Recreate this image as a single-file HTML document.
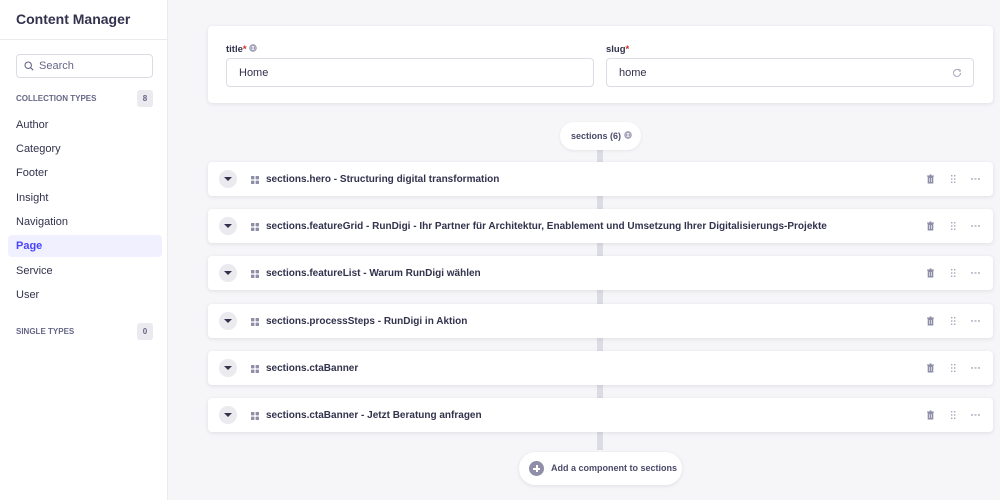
<!DOCTYPE html>
<html><head><meta charset="utf-8"><style>
*{box-sizing:border-box;margin:0;padding:0}
body{width:1000px;height:500px;overflow:hidden;background:#f6f6f9;font-family:"Liberation Sans",sans-serif;color:#32324d;position:relative}
.side{position:absolute;left:0;top:0;width:168px;height:500px;background:#fff;border-right:1px solid #eaeaef}
.side h1{position:absolute;left:16px;top:11px;font-size:14px;font-weight:bold;color:#32324d}
.side .hr{position:absolute;left:0;top:39px;width:167px;border-top:1px solid #eaeaef}
.search{position:absolute;left:16px;top:54px;width:137px;height:24px;border:1px solid #dcdce4;border-radius:4px;font-size:11px;color:#666687;padding:5px 0 0 22px}
.search svg{position:absolute;left:7px;top:6px}
.cat{position:absolute;left:16px;font-size:8px;font-weight:bold;color:#666687}
.badge{position:absolute;left:137px;width:16px;height:17px;background:#eaeaef;border-radius:3px;font-size:8px;font-weight:bold;color:#666687;text-align:center;line-height:17px}
.item{position:absolute;left:16px;font-size:11px;color:#32324d}
.active{position:absolute;left:8px;top:235px;width:154px;height:22px;background:#f0f0ff;border-radius:4px}
.card{position:absolute;background:#fff;border-radius:4px;box-shadow:0 1px 4px rgba(33,33,52,.1)}
.lbl{position:absolute;font-size:9.5px;font-weight:bold;color:#32324d}
.lbl b{color:#d02b20}
.inp{position:absolute;height:29px;border:1px solid #dcdce4;border-radius:4px;font-size:11px;padding:8px 0 0 12px;color:#32324d}
.line{position:absolute;left:597px;top:150px;width:6px;height:300px;background:#dcdce4}
.pill{position:absolute;left:560px;top:122px;width:81px;height:28px;background:#fff;border-radius:14px;font-size:9px;font-weight:bold;color:#4a4a6a;padding:9px 0 0 11px;box-shadow:0 1px 3px rgba(33,33,52,.08);white-space:nowrap}
.row{position:absolute;left:208px;width:785px;height:34px;background:#fff;border-radius:4px;box-shadow:0 1px 4px rgba(33,33,52,.1)}
.row .tg{position:absolute;left:11px;top:8px;width:18px;height:18px;border-radius:9px;background:#eaeaef}
.row .tg:after{content:"";position:absolute;left:5px;top:7px;border-left:4px solid transparent;border-right:4px solid transparent;border-top:4px solid #32324d}
.row .gi{position:absolute;left:43px;top:14px}
.row .t{position:absolute;left:58px;top:12px;font-size:10px;font-weight:bold;color:#32324d;white-space:nowrap}
.row .ic{position:absolute;left:695px;top:12px}
.add{position:absolute;left:519px;top:452px;width:163px;height:33px;background:#fff;border-radius:17px;box-shadow:0 1px 4px rgba(33,33,52,.1);font-size:9px;font-weight:bold;color:#4a4a6a;padding:11px 0 0 32px;white-space:nowrap}
.add .c{position:absolute;left:10px;top:9px;width:15px;height:15px;border-radius:8px;background:#8e8ea9}
.add .c:before{content:"";position:absolute;left:4px;top:7px;width:7px;height:1.5px;background:#fff}
.add .c:after{content:"";position:absolute;left:7px;top:4px;width:1.5px;height:7px;background:#fff}
</style></head><body>
<div class="side">
<h1>Content Manager</h1><div class="hr"></div>
<div class="search"><svg width="10" height="10" viewBox="0 0 10 10"><circle cx="4.2" cy="4.2" r="3.2" fill="none" stroke="#666687" stroke-width="1.1"/><path d="M6.6 6.6L9.2 9.2" stroke="#666687" stroke-width="1.1"/></svg>Search</div>
<div class="cat" style="top:94px">COLLECTION TYPES</div><div class="badge" style="top:90px">8</div>
<div class="item" style="top:119px">Author</div>
<div class="item" style="top:143px">Category</div>
<div class="item" style="top:167px">Footer</div>
<div class="item" style="top:192px">Insight</div>
<div class="item" style="top:216px">Navigation</div>
<div class="active"></div>
<div class="item" style="top:240px;font-weight:bold;color:#4945ff">Page</div>
<div class="item" style="top:265px">Service</div>
<div class="item" style="top:289px">User</div>
<div class="cat" style="top:327px">SINGLE TYPES</div><div class="badge" style="top:323px">0</div>
</div>
<div class="card" style="left:208px;top:26px;width:785px;height:77px"></div>
<div class="lbl" style="left:226px;top:44px">title<b>*</b> <svg width="8" height="8" viewBox="0 0 8 8"><circle cx="4" cy="4" r="3.2" fill="none" stroke="#8e8ea9" stroke-width="1"/><path d="M1 4h6M4 .8c-2 2-2 4.4 0 6.4M4 .8c2 2 2 4.4 0 6.4" fill="none" stroke="#8e8ea9" stroke-width=".7"/></svg></div>
<div class="inp" style="left:226px;top:58px;width:368px">Home</div>
<div class="lbl" style="left:606px;top:44px">slug<b>*</b></div>
<div class="inp" style="left:606px;top:58px;width:368px">home<svg style="position:absolute;right:11px;top:9px" width="10" height="10" viewBox="0 0 10 10"><path d="M8.5 5A3.5 3.5 0 1 1 7.4 2.4" fill="none" stroke="#a5a5ba" stroke-width="1"/><path d="M6.5 1.2L8.4 2.2 7.6 4" fill="none" stroke="#a5a5ba" stroke-width="1"/></svg></div>
<div class="line"></div>
<div class="pill">sections (6) <svg width="8" height="8" viewBox="0 0 8 8"><circle cx="4" cy="4" r="3.2" fill="none" stroke="#8e8ea9" stroke-width="1"/><path d="M1 4h6M4 .8c-2 2-2 4.4 0 6.4M4 .8c2 2 2 4.4 0 6.4" fill="none" stroke="#8e8ea9" stroke-width=".7"/></svg></div>

<div id="rows"></div>
<div class="add"><span class="c"></span>Add a component to sections</div>
<script>
var t=["sections.hero - Structuring digital transformation","sections.featureGrid - RunDigi - Ihr Partner für Architektur, Enablement und Umsetzung Ihrer Digitalisierungs-Projekte","sections.featureList - Warum RunDigi wählen","sections.processSteps - RunDigi in Aktion","sections.ctaBanner","sections.ctaBanner - Jetzt Beratung anfragen"];
var y=[162,209,256,304,351,398],h="";
var ic='<svg class="ic" width="90" height="10" viewBox="0 0 90 10"><path d="M24 1.5h7v1H24zM26.5 .5h2v1h-2z M24.7 2.5h5.6v7h-5.6z" fill="#8e8ea9"/><path d="M26.5 4v4M28.5 4v4" stroke="#fff" stroke-width=".6"/><g fill="#a5a5ba"><rect x="48" y="1" width="1.4" height="1.4"/><rect x="51" y="1" width="1.4" height="1.4"/><rect x="48" y="4.3" width="1.4" height="1.4"/><rect x="51" y="4.3" width="1.4" height="1.4"/><rect x="48" y="7.6" width="1.4" height="1.4"/><rect x="51" y="7.6" width="1.4" height="1.4"/><rect x="68" y="4.3" width="2" height="1.3"/><rect x="71.5" y="4.3" width="2" height="1.3"/><rect x="75" y="4.3" width="2" height="1.3"/></g></svg>';
for(var i=0;i<6;i++)h+='<div class="row" style="top:'+y[i]+'px"><div class="tg"></div><svg class="gi" width="8" height="8" viewBox="0 0 8 8" fill="#8e8ea9"><rect x="0" y="0" width="3.4" height="3.4" rx=".5"/><rect x="4.6" y="0" width="3.4" height="3.4" rx=".5"/><rect x="0" y="4.6" width="3.4" height="3.4" rx=".5"/><rect x="4.6" y="4.6" width="3.4" height="3.4" rx=".5"/></svg><div class="t">'+t[i]+'</div>'+ic+'</div>';
document.getElementById('rows').innerHTML=h;
</script>
</body></html>
